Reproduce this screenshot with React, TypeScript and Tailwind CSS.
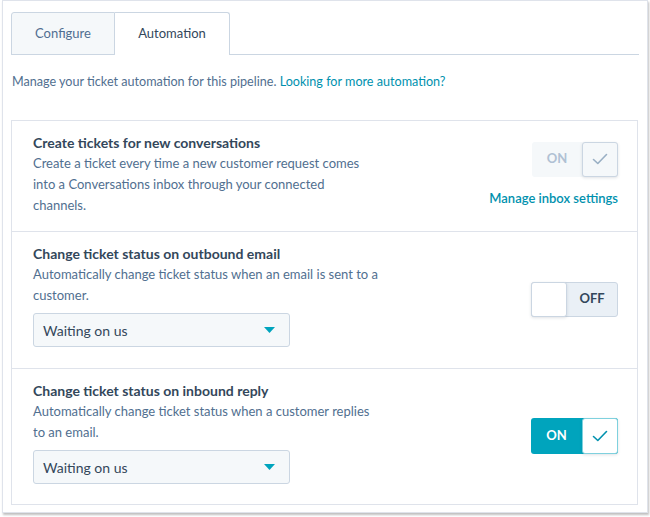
import { useState } from "react";

const font = { fontFamily: "Lato, 'Noto Sans', sans-serif" };

type ToggleProps = {
  on: boolean;
  disabled?: boolean;
  onClick?: () => void;
};

function Check({ color }: { color: string }) {
  return (
    <svg width="16" height="12" viewBox="0 0 16 12" fill="none">
      <path d="M1.5 6.5 L5.8 10.5 L14.5 1.5" stroke={color} strokeWidth="1.6" strokeLinecap="round" strokeLinejoin="round" />
    </svg>
  );
}

function Toggle({ on, disabled, onClick }: ToggleProps) {
  if (disabled) {
    return (
      <div className="flex h-[35px] w-[86px] rounded-[3px] bg-[#f5f8fa]">
        <div className="flex flex-1 items-center justify-center text-[13px] font-bold text-[#b0c1d4]">ON</div>
        <div className="flex w-[36px] items-center justify-center rounded-[3px] border border-[#cbd6e2] bg-[#f5f8fa] shadow-[0_1px_3px_rgba(45,62,80,0.15)]">
          <Check color="#99afc4" />
        </div>
      </div>
    );
  }
  if (on) {
    return (
      <button onClick={onClick} className="mt-[7px] flex h-[36px] w-[87px] rounded-[3px] bg-[#00a4bd]">
        <div className="flex flex-1 items-center justify-center text-[13px] font-bold text-white">ON</div>
        <div className="flex h-full w-[36px] items-center justify-center rounded-[3px] border border-[#7fd1de] bg-white shadow-[0_1px_3px_rgba(45,62,80,0.15)]">
          <Check color="#0091ae" />
        </div>
      </button>
    );
  }
  return (
    <button onClick={onClick} className="mt-[7px] flex h-[35px] w-[87px] rounded-[3px] border border-[#cbd6e2] bg-[#eaf0f6]">
      <div className="-my-px -ml-px h-[35px] w-[36px] rounded-[3px] border border-[#cbd6e2] bg-white shadow-[0_1px_3px_rgba(45,62,80,0.15)]" />
      <div className="flex flex-1 items-center justify-center text-[13px] font-bold text-[#33475b]">OFF</div>
    </button>
  );
}

function Select({ value }: { value: string }) {
  return (
    <div className="mt-[7px] flex h-[34px] w-[257px] items-center justify-between rounded-[3px] border border-[#cbd6e2] bg-[#f5f8fa] pl-[9px] pr-[14px] text-[14px] text-[#33475b]">
      <span>{value}</span>
      <svg width="11" height="6" viewBox="0 0 11 6">
        <path d="M0 0 L11 0 L5.5 6 Z" fill="#00a4bd" />
      </svg>
    </div>
  );
}

export default function App() {
  const [outbound, setOutbound] = useState(false);
  const [inbound, setInbound] = useState(true);

  return (
    <div className="h-[517px] w-[650px] bg-white" style={font}>
      <div className="ml-[2px] h-[513px] w-[646px] border border-[#dfe3eb] pl-[8px] pr-[9px] pt-[11px] shadow-[1px_2px_2px_rgba(0,0,0,0.25)]">
        {/* tabs */}
        <div className="flex h-[43px] w-[628px] border-b border-[#cbd6e2]">
          <div className="flex h-[43px] w-[104px] items-center justify-center rounded-tl-[3px] border border-[#cbd6e2] bg-[#f5f8fa] text-[13px] text-[#506e91]">
            Configure
          </div>
          <div className="-mb-px flex h-[43px] w-[115px] items-center justify-center rounded-tr-[3px] border border-l-0 border-b-0 border-[#cbd6e2] bg-white text-[13px] text-[#33475b]">
            Automation
          </div>
        </div>

        <p className="ml-px mt-[17px] text-[12.6px] leading-[20px] text-[#516f90]">
          Manage your ticket automation for this pipeline.{" "}
          <a className="text-[#0091ae]">Looking for more automation?</a>
        </p>

        {/* card */}
        <div className="mt-[28px] w-[627px] border border-[#dfe3eb]">
          <div className="flex items-center justify-between border-b border-[#dfe3eb] pb-[15px] pl-[21px] pr-[19px] pt-[12px]">
            <div className="w-[347px]">
              <h3 className="text-[14px] font-bold leading-[20px] text-[#33475b]">Create tickets for new conversations</h3>
              <p className="text-[13px] leading-[21px] text-[#516f90]">
                Create a ticket every time a new customer request comes into a Conversations inbox through your connected channels.
              </p>
            </div>
            <div className="flex flex-col items-end">
              <Toggle on disabled />
              <a className="mt-[11px] text-[13px] font-semibold leading-[20px] text-[#0091ae]">Manage inbox settings</a>
            </div>
          </div>

          <div className="flex items-center justify-between border-b border-[#dfe3eb] pb-[21px] pl-[21px] pr-[19px] pt-[12px]">
            <div className="w-[347px]">
              <h3 className="text-[14px] font-bold leading-[20px] text-[#33475b]">Change ticket status on outbound email</h3>
              <p className="text-[13px] leading-[21px] text-[#516f90]">
                Automatically change ticket status when an email is sent to a customer.
              </p>
              <Select value="Waiting on us" />
            </div>
            <Toggle on={outbound} onClick={() => setOutbound(!outbound)} />
          </div>

          <div className="flex items-center justify-between pb-[20px] pl-[21px] pr-[19px] pt-[12px]">
            <div className="w-[347px]">
              <h3 className="text-[14px] font-bold leading-[20px] text-[#33475b]">Change ticket status on inbound reply</h3>
              <p className="text-[13px] leading-[21px] text-[#516f90]">
                Automatically change ticket status when a customer replies to an email.
              </p>
              <Select value="Waiting on us" />
            </div>
            <Toggle on={inbound} onClick={() => setInbound(!inbound)} />
          </div>
        </div>
      </div>
    </div>
  );
}
